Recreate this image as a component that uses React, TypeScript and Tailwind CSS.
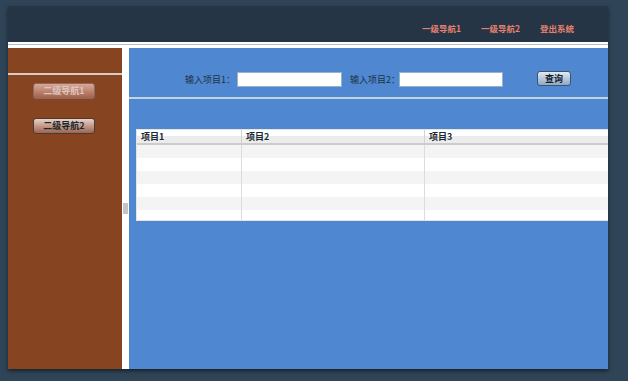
const cjk = 'font-["Noto_Sans_CJK_SC","Noto_Sans",sans-serif]';

function NavLink({ label }: { label: string }) {
  return <span className="text-[8.5px] leading-[12px] font-bold text-[#e58070]">{label}</span>;
}

function SideButton({ label, active }: { label: string; active?: boolean }) {
  return (
    <div
      className={
        active
          ? 'ml-[25px] flex h-[16px] w-[62px] items-center justify-center rounded-[3px] border border-[#8a6a60] bg-gradient-to-b from-[#d8a898] to-[#a2614c] text-[9px] font-bold text-[#dcc6be]'
          : 'ml-[25px] flex h-[16px] w-[62px] items-center justify-center rounded-[3px] border border-[#4a3a36] bg-gradient-to-b from-[#ead2c6] to-[#9c6450] text-[9px] font-bold text-[#1c2a30]'
      }
    >
      {label}
    </div>
  );
}

const rows = [0, 1, 2, 3, 4, 5];

export default function App() {
  return (
    <div className={`h-[381px] w-[628px] overflow-hidden bg-[#2f4557] pl-[8px] pt-[6px] ${cjk}`}>
      <div className="flex h-[363px] w-[600px] flex-col shadow-[0_2px_4px_rgba(0,0,0,0.55)]">
        {/* top bar */}
        <div className="flex h-[36px] items-start justify-end gap-[20px] bg-[#263545] pr-[34px] pt-[16px]">
          <NavLink label="一级导航1" />
          <NavLink label="一级导航2" />
          <NavLink label="登出系统" />
        </div>
        <div className="flex h-[6px] flex-col bg-white pt-[2px]">
          <div className="h-px bg-[#b8c0c8]" />
        </div>

        <div className="flex flex-1">
          {/* sidebar */}
          <div className="flex w-[114px] flex-col bg-[#874421]">
            <div className="mt-[25px] h-[2px] bg-[#d8ccc4]" />
            <div className="mt-[8px] flex flex-col gap-[19px]">
              <SideButton label="二级导航1" active />
              <SideButton label="二级导航2" />
            </div>
          </div>

          {/* splitter */}
          <div className="flex w-[7px] flex-col bg-white pl-[1px] pt-[155px]">
            <div className="h-[11px] w-[5px] bg-[#c4c4c4]" />
          </div>

          {/* main */}
          <div className="flex flex-1 flex-col overflow-hidden bg-[#4f87d1]">
            <div className="flex h-[49px] items-start pl-[56px] pt-[24px] text-[9px] text-[#1e3242]">
              <span className="mt-[2px] w-[52px] shrink-0 whitespace-nowrap leading-[12px]">输入项目1：</span>
              <div className="h-[15px] w-[105px] border border-[#9ab0c8] bg-white" />
              <span className="ml-[8px] mt-[2px] w-[49px] shrink-0 whitespace-nowrap leading-[12px]">输入项目2：</span>
              <div className="h-[15px] w-[104px] border border-[#9ab0c8] bg-white" />
              <div className="-mt-[1px] ml-[34px] flex h-[15px] w-[34px] items-center justify-center rounded-[3px] border border-[#3e5468] bg-gradient-to-b from-[#e2ebf4] to-[#8ea8c4] font-bold text-[#14222c]">
                查询
              </div>
            </div>
            <div className="h-[2px] bg-[#c6d2de]" />

            <div className="ml-[7px] mt-[30px] w-[520px] border border-[#e4e4e4] bg-white text-[9px] text-[#1a2a32]">
              <div className="flex h-[15px] border-b-2 border-[#cccccc] bg-gradient-to-b from-white from-50% to-[#ececec] to-50% font-bold leading-[13px]">
                <div className="w-[105px] border-r border-[#d4d4d4] pl-[4px]">项目1</div>
                <div className="w-[183px] border-r border-[#d4d4d4] pl-[4px]">项目2</div>
                <div className="flex-1 pl-[4px]">项目3</div>
              </div>
              <div className="h-[75px] overflow-hidden">
                {rows.map((r) => (
                  <div key={r} className={r % 2 === 0 ? 'flex h-[13px] bg-[#f4f4f4]' : 'flex h-[13px] bg-white'}>
                    <div className="w-[105px] border-r border-[#dcdcdc]" />
                    <div className="w-[183px] border-r border-[#dcdcdc]" />
                    <div className="flex-1" />
                  </div>
                ))}
              </div>
            </div>
          </div>
        </div>
      </div>
    </div>
  );
}
